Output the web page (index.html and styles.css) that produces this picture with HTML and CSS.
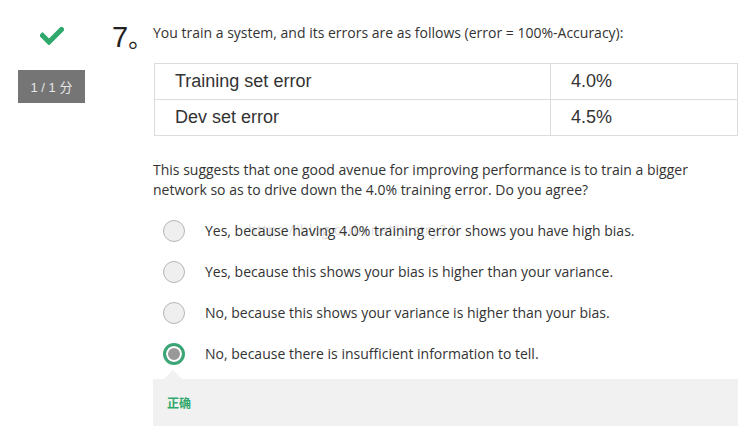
FILE: index.html
```html
<!DOCTYPE html>
<html lang="en">
<head>
<meta charset="utf-8">
<title>Quiz question 7</title>
<link rel="stylesheet" href="styles.css">
</head>
<body>
<div class="page">
  <div class="side">
    <svg class="check" width="24" height="18" viewBox="0 0 24 18" aria-hidden="true">
      <path d="M2.5 8.5 L9 15 L21.5 2.5" fill="none" stroke="#2fa86b" stroke-width="5" stroke-linecap="square"/>
    </svg>
    <div class="score">1 / 1 分</div>
  </div>
  <div class="num">7<span class="dot">。</span></div>
  <div class="content">
    <p class="question">You train a system, and its errors are as follows (error = 100%-Accuracy):</p>
    <table class="errors">
      <tr><td class="label">Training set error</td><td class="val">4.0%</td></tr>
      <tr><td class="label">Dev set error</td><td class="val">4.5%</td></tr>
    </table>
    <p class="prompt">This suggests that one good avenue for improving performance is to train a bigger network so as to drive down the 4.0% training error. Do you agree?</p>
    <ul class="options">
      <li class="opt"><span class="radio"></span><span class="txt">Yes, because having 4.0% training error shows you have high bias.</span><span class="mark">https://blog.csdn.net/justry24</span></li>
      <li class="opt"><span class="radio"></span><span class="txt">Yes, because this shows your bias is higher than your variance.</span></li>
      <li class="opt"><span class="radio"></span><span class="txt">No, because this shows your variance is higher than your bias.</span></li>
      <li class="opt"><span class="radio on"></span><span class="txt">No, because there is insufficient information to tell.</span></li>
    </ul>
    <div class="feedback"><span class="ok">正确</span></div>
  </div>
</div>
</body>
</html>
```

FILE: styles.css
```css
html, body {
  margin: 0;
  padding: 0;
  background: #fff;
}
body {
  font-family: "Open Sans", "Noto Sans CJK SC", sans-serif;
  color: #333;
  font-size: 14px;
}
.page {
  display: flex;
  align-items: flex-start;
}
.side {
  width: 67px;
  margin-left: 18px;
  padding-top: 27px;
  display: flex;
  flex-direction: column;
  align-items: center;
}
.check {
  display: block;
}
.score {
  margin-top: 25px;
  width: 67px;
  height: 33px;
  background: #757575;
  color: #e6e6e6;
  font-family: "Liberation Sans", "Noto Sans CJK SC", sans-serif;
  font-size: 13px;
  display: flex;
  align-items: center;
  justify-content: center;
}
.num {
  width: 41px;
  margin-left: 27px;
  padding-top: 20px;
  font-family: "Liberation Sans", "Noto Sans CJK SC", sans-serif;
  font-size: 29px;
  line-height: 34px;
  color: #222;
  white-space: nowrap;
}
.dot {
  font-family: "Noto Sans CJK SC", sans-serif;
  font-size: 24px;
}
.content {
  width: 585px;
  padding-top: 23px;
}
.question {
  margin: 0;
  line-height: 20px;
}
.errors {
  margin-top: 20px;
  margin-left: 1px;
  width: 584px;
  border-collapse: collapse;
  font-family: "Liberation Sans", sans-serif;
  font-size: 18px;
  color: #333;
}
.errors td {
  border: 1px solid #dcdcdc;
  height: 36px;
  padding: 0 20px;
  box-sizing: border-box;
}
.errors .label {
  width: 396px;
}
.prompt {
  margin: 24px 0 0;
  line-height: 20px;
}
.options {
  list-style: none;
  margin: 10px 0 0;
  padding: 0;
}
.opt {
  position: relative;
  height: 41px;
  display: flex;
  align-items: center;
}
.radio {
  width: 20px;
  height: 20px;
  border: 1px solid #b5b5b5;
  border-radius: 50%;
  background: #efefef;
  margin-left: 10px;
  flex: none;
}
.radio.on {
  width: 16px;
  height: 16px;
  border: 3px solid #3aa676;
  background: #999;
  box-shadow: inset 0 0 0 2px #fff;
}
.txt {
  margin-left: 20px;
}
.mark {
  position: absolute;
  left: 95px;
  top: 10px;
  font-size: 14px;
  color: rgba(0, 0, 0, 0.16);
  letter-spacing: 0.5px;
  pointer-events: none;
}
.feedback {
  position: relative;
  margin-top: 5px;
  height: 47px;
  background: #f1f1f1;
  display: flex;
  align-items: center;
  padding-left: 14px;
}
.feedback::before {
  content: "";
  position: absolute;
  left: 11px;
  top: -9px;
  border-left: 9px solid transparent;
  border-right: 9px solid transparent;
  border-bottom: 9px solid #f1f1f1;
}
.ok {
  color: #2fa86b;
  font-family: "Noto Sans CJK SC", sans-serif;
  font-weight: bold;
  font-size: 12px;
}
```
